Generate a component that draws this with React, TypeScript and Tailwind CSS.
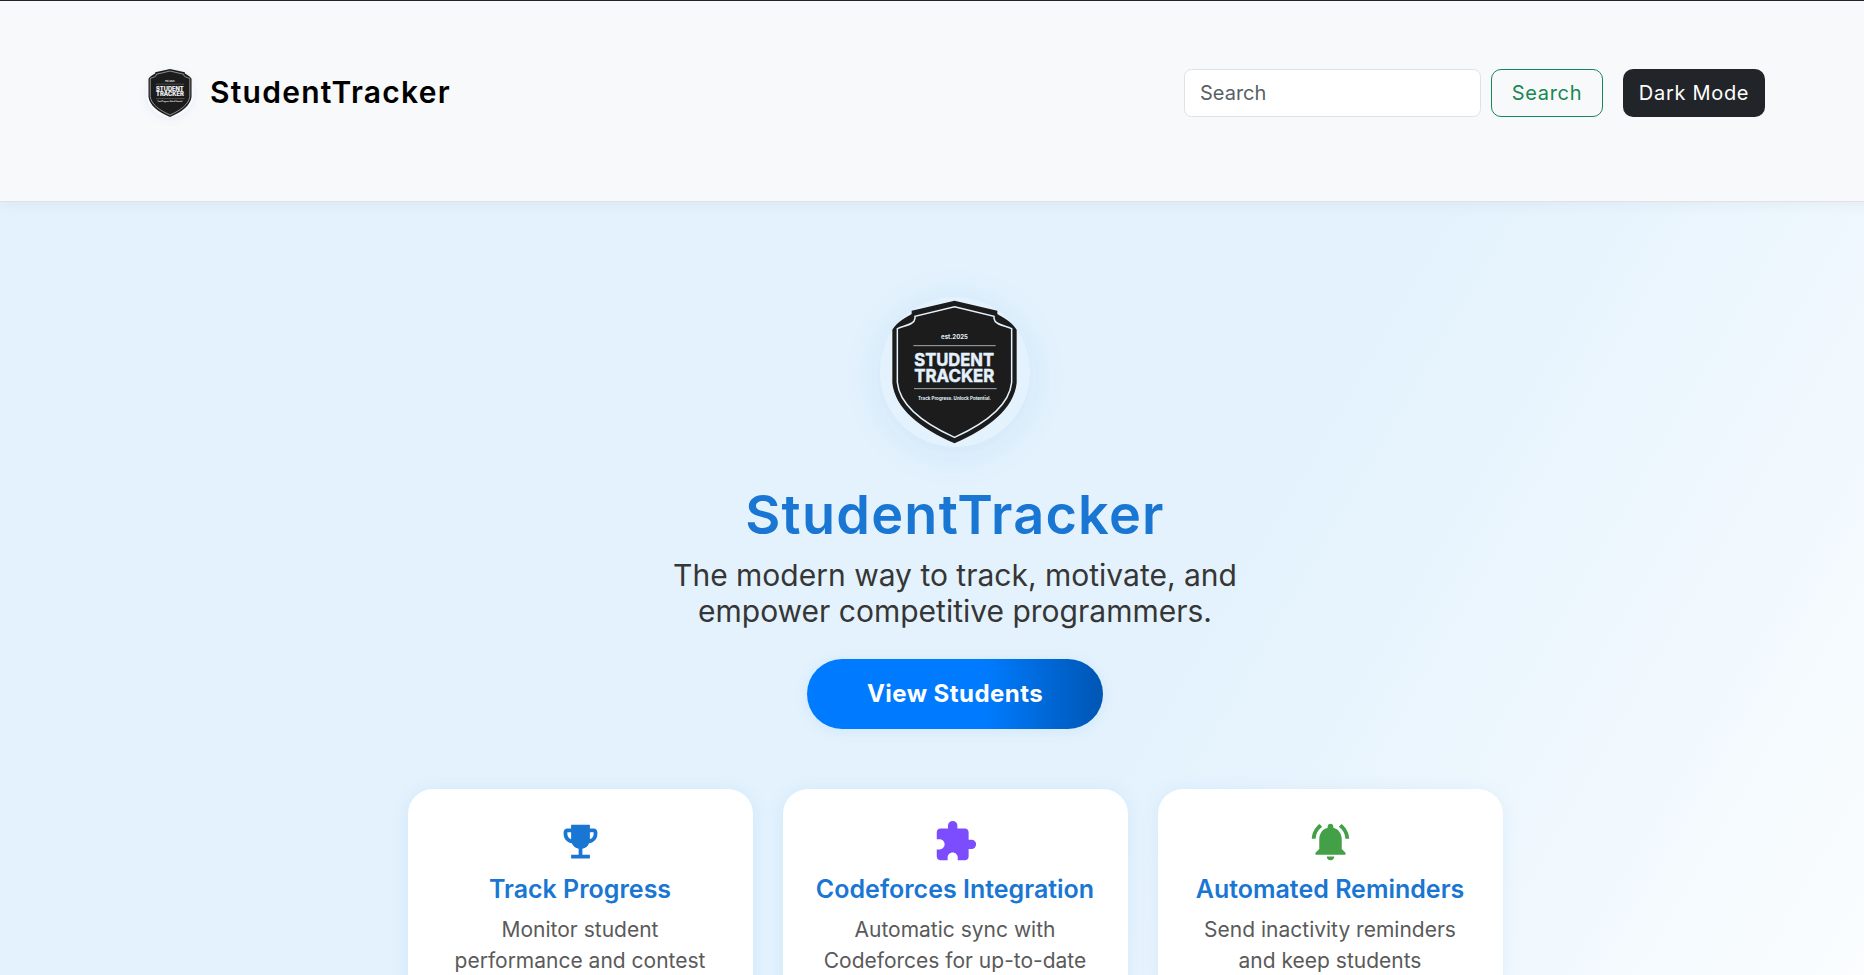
import type { ReactNode } from "react";
import { MdEmojiEvents, MdExtension, MdNotificationsActive } from "react-icons/md";

function Shield({ viewBox, className }: { viewBox: string; className: string }) {
  return (
    <svg viewBox={viewBox} preserveAspectRatio="none" className={className} aria-hidden="true">
      <path
        d="M223.5 11 L352 41 V51 C366 60 394 72 410 98 V258 C402 335 325 395 223.5 439 C122 395 45 335 37 258 V98 C53 72 81 60 95 51 V41 Z"
        fill="#1c1c1c"
      />
      <path
        d="M223.5 29 L342 58 V64 C344 82 368 84 395 95 V256 C388 325 312 381 223.5 421 C135 381 59 325 52 256 V95 C79 84 103 82 105 64 V58 Z"
        fill="none"
        stroke="currentColor"
        strokeWidth="4.5"
      />
      <path d="M100 146 H347 M102 275 H350" stroke="currentColor" strokeWidth="2.5" opacity="0.8" />
      <g fill="currentColor" fontFamily="Inter, sans-serif" fontWeight="700">
        <text x="183" y="127" fontSize="19" textLength="81" lengthAdjust="spacingAndGlyphs">est.2025</text>
        <text x="103" y="206" fontSize="53" textLength="239" lengthAdjust="spacingAndGlyphs" stroke="currentColor" strokeWidth="1.5">STUDENT</text>
        <text x="103" y="254" fontSize="53" textLength="240" lengthAdjust="spacingAndGlyphs" stroke="currentColor" strokeWidth="1.5">TRACKER</text>
        <text x="114" y="308" fontSize="14" textLength="219" lengthAdjust="spacingAndGlyphs">Track Progress. Unlock Potential.</text>
      </g>
    </svg>
  );
}

function Header() {
  return (
    <header className="relative z-10 flex h-[202px] items-start justify-between border-t border-b border-t-[#212529] border-b-[#dee2e6] bg-[#f8f9fb] px-[145px] pt-[68px] shadow-[0_2px_15px_rgba(0,0,0,0.05)]">
      <div className="flex h-12 items-center gap-4 pl-px">
        <div className="size-12 rounded-full shadow-[0_2px_10px_rgba(25,118,210,0.08)]">
          <Shield viewBox="15.3 11 416 428" className="size-12 text-[#f8f9fb]" />
        </div>
        <span className="pb-0.5 text-[30px] leading-none font-semibold tracking-[1.25px] text-black">StudentTracker</span>
      </div>
      <div className="flex h-12 items-stretch text-xl">
        <input
          type="search"
          placeholder="Search"
          className="mr-[10px] w-[297px] rounded-[7.5px] border border-[#dee2e6] bg-white px-[15px] text-xl outline-none placeholder:text-[#5a5f64]"
        />
        <button className="mr-5 w-28 rounded-[10px] border border-[#198754] tracking-[0.7px] text-[#198754]">Search</button>
        <button className="w-[142px] rounded-[10px] bg-[#212529] tracking-[0.7px] text-white">Dark Mode</button>
      </div>
    </header>
  );
}

function FeatureCard({ icon, title, children }: { icon: ReactNode; title: string; children: ReactNode }) {
  return (
    <article className="flex w-[345px] flex-col items-center rounded-[25px] bg-white p-[30px] text-center shadow-[0_2px_20px_rgba(25,118,210,0.08)]">
      {icon}
      <h2 className="mt-[10px] text-[25px] leading-[30px] font-semibold whitespace-nowrap text-[#1976d2]">{title}</h2>
      <p className="mt-[10px] text-[21px] leading-[31px] text-[#5a5a5a]">{children}</p>
    </article>
  );
}

export default function App() {
  return (
    <div className="h-[975px] w-full overflow-hidden font-['Inter',sans-serif]">
      <div className="w-[1910px]">
        <Header />
        <main className="flex h-[980px] flex-col items-center bg-[linear-gradient(120deg,#e3f2fd_58%,#ffffff_100%)] pt-[95px]">
          <div className="size-[150px] rounded-full shadow-[0_5px_40px_rgba(25,118,210,0.1)]">
            <Shield viewBox="0 0 450 450" className="size-[150px] text-[#e3f2fd]" />
          </div>
          <h1 className="mt-[35px] text-[54px] leading-[65px] font-semibold tracking-[1.25px] text-[#1976d2]">StudentTracker</h1>
          <p className="mt-[10px] text-center text-[30px] leading-[36px] text-[#363636]">
            The modern way to track, motivate, and
            <br />
            empower competitive programmers.
          </p>
          <button className="mt-[30px] h-[70px] w-[296px] rounded-full bg-[linear-gradient(90deg,#007bff_60%,#0056b3_100%)] text-2xl font-bold tracking-[0.45px] text-white shadow-[0_2px_15px_rgba(25,118,210,0.08)]">
            View Students
          </button>
          <section className="mt-[60px] flex gap-[30px]">
            <FeatureCard icon={<MdEmojiEvents className="size-[45px] text-[#1976d2]" />} title="Track Progress">
              Monitor student
              <br />
              performance and contest
            </FeatureCard>
            <FeatureCard icon={<MdExtension className="size-[45px] text-[#7c4dff]" />} title="Codeforces Integration">
              Automatic sync with
              <br />
              Codeforces for up-to-date
            </FeatureCard>
            <FeatureCard icon={<MdNotificationsActive className="size-[45px] text-[#43a047]" />} title="Automated Reminders">
              Send inactivity reminders
              <br />
              and keep students
            </FeatureCard>
          </section>
        </main>
      </div>
    </div>
  );
}
